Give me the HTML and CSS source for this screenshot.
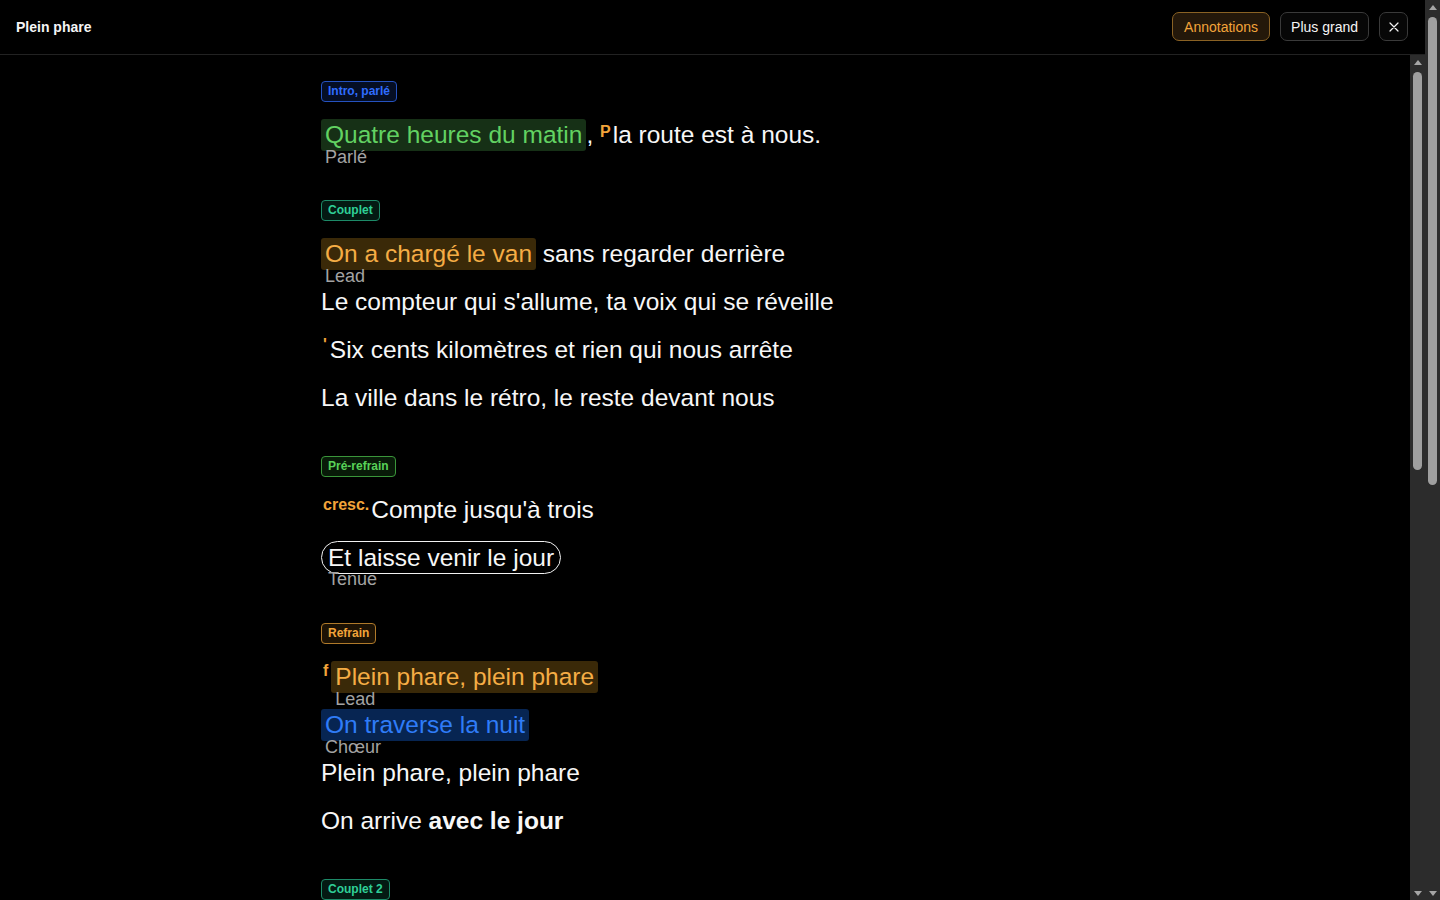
FILE: index.html
```html
<!DOCTYPE html>
<html lang="fr">
<head>
<meta charset="utf-8">
<title>Plein phare</title>
<link rel="stylesheet" href="styles.css">
</head>
<body>
<div class="app">
  <header class="topbar">
    <h1 class="topbar__title">Plein phare</h1>
    <div class="topbar__actions">
      <button class="btn btn--active">Annotations</button>
      <button class="btn">Plus grand</button>
      <button class="btn btn--icon" aria-label="Fermer">
        <svg width="10" height="10" viewBox="0 0 10 10"><path d="M1 1L9 9M9 1L1 9" stroke="#f5f5f5" stroke-width="1.2" stroke-linecap="round"/></svg>
      </button>
    </div>
  </header>
  <div class="viewer">
    <main class="viewer__scroll">
      <div class="sheet">
        <section class="section">
          <span class="tag tag--blue">Intro, parlé</span>
          <div class="line noted"><span class="hl hl--green">Quatre heures du matin<span class="note">Parlé</span></span>, <span class="mark">P</span>la route est à nous.</div>
        </section>

        <section class="section">
          <span class="tag tag--teal">Couplet</span>
          <div class="line noted"><span class="hl hl--amber">On a chargé le van<span class="note">Lead</span></span> sans regarder derrière</div>
          <div class="line">Le compteur qui s'allume, ta voix qui se réveille</div>
          <div class="line"><span class="mark mark--breath">'</span>Six cents kilomètres et rien qui nous arrête</div>
          <div class="line">La ville dans le rétro, le reste devant nous</div>
        </section>

        <section class="section">
          <span class="tag tag--green">Pré-refrain</span>
          <div class="line"><span class="mark mark--text">cresc.</span>Compte jusqu'à trois</div>
          <div class="line noted"><span class="pill">Et laisse venir le jour<span class="note">Tenue</span></span></div>
        </section>

        <section class="section">
          <span class="tag tag--amber">Refrain</span>
          <div class="line noted"><span class="mark mark--dyn">f</span><span class="hl hl--amber">Plein phare, plein phare<span class="note">Lead</span></span></div>
          <div class="line noted"><span class="hl hl--blue">On traverse la nuit<span class="note">Chœur</span></span></div>
          <div class="line">Plein phare, plein phare</div>
          <div class="line">On arrive <strong>avec le jour</strong></div>
        </section>

        <section class="section">
          <span class="tag tag--teal">Couplet 2</span>
          <div class="line">Les stations qui défilent, le café dans les mains</div>
          <div class="line">Tes pieds sur le tableau de bord, la radio en sourdine</div>
          <div class="line">On chante faux mais fort, personne pour nous entendre</div>
          <div class="line">Le ciel qui pâlit doucement sur la ligne blanche</div>
        </section>

        <section class="section">
          <span class="tag tag--amber">Refrain</span>
          <div class="line">Plein phare, plein phare</div>
          <div class="line">On traverse la nuit</div>
          <div class="line">Plein phare, plein phare</div>
          <div class="line">On arrive avec le jour</div>
        </section>

        <section class="section">
          <span class="tag tag--blue">Pont</span>
          <div class="line">Et si la route s'arrête</div>
          <div class="line">On ira plus loin à pied</div>
          <div class="line">Tant qu'il reste de la lumière</div>
        </section>

        <section class="section">
          <span class="tag tag--green">Outro</span>
          <div class="line">Plein phare</div>
          <div class="line">Plein phare</div>
          <div class="line">Jusqu'au jour</div>
        </section>
      </div>
    </main>
    <div class="scrollbar" aria-hidden="true">
      <span class="scrollbar__btn"><svg width="8" height="5" viewBox="0 0 8 5"><path d="M0 5L4 0L8 5Z" fill="#a6a6a6"/></svg></span>
      <span class="scrollbar__track"><span class="scrollbar__thumb" style="margin-top:2px;height:398px"></span></span>
      <span class="scrollbar__btn scrollbar__btn--down"><svg width="8" height="5" viewBox="0 0 8 5"><path d="M0 0L4 5L8 0Z" fill="#a6a6a6"/></svg></span>
    </div>
  </div>
</div>
<div class="scrollbar scrollbar--page" aria-hidden="true">
  <span class="scrollbar__btn"><svg width="8" height="5" viewBox="0 0 8 5"><path d="M0 5L4 0L8 5Z" fill="#a6a6a6"/></svg></span>
  <span class="scrollbar__track"><span class="scrollbar__thumb" style="margin-top:2px;height:468px"></span></span>
  <span class="scrollbar__btn scrollbar__btn--down"><svg width="8" height="5" viewBox="0 0 8 5"><path d="M0 0L4 5L8 0Z" fill="#a6a6a6"/></svg></span>
</div>
</body>
</html>
```

FILE: styles.css
```css
html {
  color-scheme: dark;
  background: #000;
}

body {
  margin: 0;
  height: 100vh;
  overflow: hidden;
  display: flex;
  background: #000;
  color: #f7f7f7;
  font-family: "Liberation Sans", Arial, sans-serif;
}

.app {
  flex: 1;
  min-width: 0;
  display: flex;
  flex-direction: column;
}

/* drawn scrollbars */
.scrollbar {
  width: 15px;
  flex: 0 0 15px;
  display: flex;
  flex-direction: column;
  background: #2c2c2c;
}

.scrollbar__btn {
  height: 15px;
  flex: 0 0 15px;
  display: flex;
  align-items: center;
  justify-content: center;
}

.scrollbar__btn--down {
  padding-top: 2px;
  box-sizing: border-box;
}

.scrollbar__track {
  flex: 1;
  display: flex;
  flex-direction: column;
  align-items: center;
}

.scrollbar__thumb {
  display: block;
  width: 9px;
  border-radius: 5px;
  background: #9f9f9f;
}

.topbar {
  height: 54px;
  flex: 0 0 54px;
  border-bottom: 1px solid #222;
  display: flex;
  align-items: center;
  justify-content: space-between;
  padding: 0 17px 0 16px;
}

.topbar__title {
  margin: 0;
  font-size: 14px;
  font-weight: 700;
  color: #f5f5f5;
}

.topbar__actions {
  display: flex;
  align-items: center;
  gap: 10px;
  margin-top: -1px;
}

.btn {
  height: 29px;
  padding: 0 10px;
  border: 1px solid #3a3a3a;
  border-radius: 7px;
  background: #070707;
  color: #f5f5f5;
  font-family: "Liberation Sans", Arial, sans-serif;
  font-size: 14px;
  line-height: 28px;
  cursor: pointer;
}

.btn--active {
  padding: 0 11px;
  border-color: #8a6224;
  background: #24180a;
  color: #f2a43a;
}

.btn--icon {
  width: 29px;
  padding: 0;
  display: flex;
  align-items: center;
  justify-content: center;
}

.viewer {
  flex: 1;
  min-height: 0;
  display: flex;
}

.viewer__scroll {
  flex: 1;
  min-width: 0;
  overflow-y: auto;
  scrollbar-width: none;
}

.sheet {
  max-width: 768px;
  margin: 0 auto;
  padding: 26px 0 26px;
}

.section {
  margin-bottom: 35px;
}

.tag {
  display: block;
  width: fit-content;
  height: 21px;
  box-sizing: border-box;
  padding: 0 6px;
  border: 1px solid;
  border-radius: 4px;
  font-size: 12px;
  font-weight: 700;
  line-height: 19px;
  margin-bottom: 8px;
}

.tag--blue {
  color: #2f6cff;
  border-color: #2552c0;
  background: #050e24;
}

.tag--teal {
  color: #2fcf97;
  border-color: #1d8a68;
  background: #041a13;
}

.tag--green {
  color: #58d158;
  border-color: #3a963a;
  background: #081a08;
}

.tag--amber {
  color: #f2a43a;
  border-color: #b07a2a;
  background: #1c1204;
}

.line {
  font-size: 24.5px;
  line-height: 50px;
  height: 48px;
  white-space: nowrap;
}

.line.noted:last-child {
  padding-bottom: 7px;
}

.hl {
  position: relative;
  display: inline-block;
  padding: 0 4px;
  line-height: 32px;
  border-radius: 3px;
}

.hl--green {
  background: #163016;
  color: #62d262;
}

.hl--amber {
  background: #3a2908;
  color: #f5ad45;
}

.hl--blue {
  background: #072552;
  color: #2f7cf8;
}

.pill {
  position: relative;
  display: inline-block;
  padding: 0 6px;
  line-height: 31px;
  border: 1px solid #f2f2f2;
  border-radius: 999px;
}

.note {
  position: absolute;
  left: 4px;
  top: calc(100% - 2px);
  font-size: 18px;
  line-height: 16px;
  color: #a3a3a3;
  white-space: nowrap;
}

.pill .note {
  left: 6px;
}

.mark {
  font-size: 16px;
  font-weight: 700;
  color: #f2a43a;
  vertical-align: 6px;
  margin: 0 2px 0 0;
  line-height: 1;
}

.mark--text {
  margin-left: 2px;
  vertical-align: 8px;
}

.mark--dyn {
  margin: 0 3px 0 2px;
  vertical-align: 9px;
}

.mark--breath {
  margin: 0 3px 0 2px;
  vertical-align: 8px;
}

strong {
  font-weight: 700;
}
```
